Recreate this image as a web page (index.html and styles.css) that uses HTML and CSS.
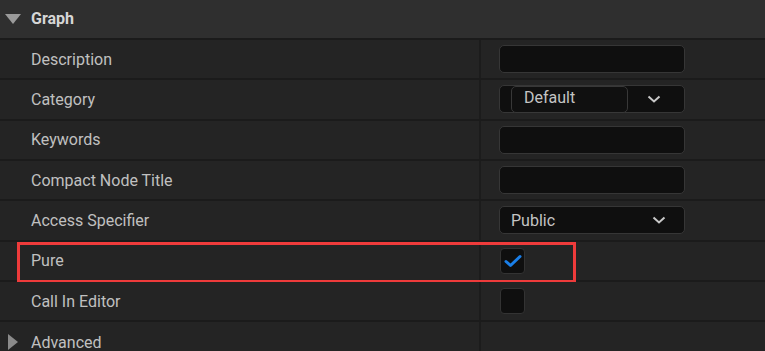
FILE: index.html
```html
<!DOCTYPE html>
<html>
<head>
<meta charset="utf-8">
<link rel="stylesheet" href="styles.css">
</head>
<body>
<div class="panel">
  <div class="header">
    <svg class="tri-down" width="16" height="10" viewBox="0 0 16 10"><polygon points="0,0 16,0 8,10" fill="#9a9a9a"/></svg>
    <span class="title">Graph</span>
  </div>
  <div class="row">
    <div class="name">Description</div>
    <div class="value"><div class="input"></div></div>
  </div>
  <div class="row">
    <div class="name">Category</div>
    <div class="value">
      <div class="input combo">
        <div class="inner">Default</div>
        <svg class="chev" width="14" height="8" viewBox="0 0 14 8"><polyline points="1.5,1.5 7,6.5 12.5,1.5" fill="none" stroke="#c8c8c8" stroke-width="2"/></svg>
      </div>
    </div>
  </div>
  <div class="row">
    <div class="name">Keywords</div>
    <div class="value"><div class="input"></div></div>
  </div>
  <div class="row">
    <div class="name">Compact Node Title</div>
    <div class="value"><div class="input"></div></div>
  </div>
  <div class="row">
    <div class="name">Access Specifier</div>
    <div class="value">
      <div class="input select">
        <span class="sel-text">Public</span>
        <svg class="chev" width="14" height="8" viewBox="0 0 14 8"><polyline points="1.5,1.5 7,6.5 12.5,1.5" fill="none" stroke="#c8c8c8" stroke-width="2"/></svg>
      </div>
    </div>
  </div>
  <div class="row">
    <div class="name">Pure</div>
    <div class="value">
      <div class="check">
        <svg width="18" height="14" viewBox="0 0 18 14"><polyline points="2,7.5 6.5,11.5 16,2.5" fill="none" stroke="#1a7fe8" stroke-width="3" stroke-linecap="round" stroke-linejoin="round"/></svg>
      </div>
    </div>
    <div class="highlight"></div>
  </div>
  <div class="row">
    <div class="name">Call In Editor</div>
    <div class="value"><div class="check"></div></div>
  </div>
  <div class="row adv">
    <div class="name adv-name">
      <svg class="tri-right" width="10" height="16" viewBox="0 0 10 16"><polygon points="0,0 10,8 0,16" fill="#8a8a8a"/></svg>
      <span>Advanced</span>
    </div>
    <div class="value"></div>
  </div>
</div>
</body>
</html>
```

FILE: styles.css
```css
html, body {
  margin: 0;
  padding: 0;
  background: #242424;
}
body {
  font-family: Roboto, "Noto Sans", sans-serif;
  width: 765px;
  height: 351px;
  overflow: hidden;
}
.panel {
  display: flex;
  flex-direction: column;
}
.header {
  height: 40px;
  background: #2f2f2f;
  border-bottom: 2px solid #1b1b1b;
  display: flex;
  align-items: center;
  box-sizing: border-box;
  flex-shrink: 0;
}
.tri-down {
  margin-left: 5px;
  margin-right: 10px;
  margin-top: -1px;
}
.title {
  font-weight: bold;
  font-size: 16px;
  color: #d6d6d6;
  margin-top: -2px;
}
.row {
  position: relative;
  display: grid;
  grid-template-columns: 481px 1fr;
  height: 40.33px;
  flex-shrink: 0;
  box-sizing: border-box;
  border-bottom: 2px solid #1b1b1b;
  background: #242424;
}
.name {
  display: flex;
  align-items: center;
  padding-left: 31px;
  font-size: 16px;
  color: #c0c0c0;
  border-right: 2px solid #1c1c1c;
}
.value {
  display: flex;
  align-items: center;
  padding-left: 18px;
}
.input {
  width: 186px;
  height: 28px;
  box-sizing: border-box;
  background: #0f0f0f;
  border: 1px solid #363636;
  border-radius: 5px;
}
.combo {
  display: flex;
  align-items: center;
  padding-left: 11px;
}
.inner {
  width: 117px;
  height: 27px;
  box-sizing: border-box;
  border: 1px solid #383838;
  border-radius: 5px;
  background: #101010;
  font-size: 16px;
  color: #c4c4c4;
  padding-left: 12px;
  line-height: 22px;
  margin-top: 1px;
}
.combo .chev {
  margin-left: 19px;
}
.select {
  display: flex;
  align-items: center;
  padding-left: 11px;
  font-size: 16px;
  color: #c4c4c4;
}
.sel-text {
  flex: 1;
}
.select .chev {
  margin-right: 18px;
}
.check {
  width: 25px;
  height: 26px;
  box-sizing: border-box;
  background: #0f0f0f;
  border: 1px solid #333333;
  border-radius: 4px;
  display: flex;
  align-items: center;
  justify-content: center;
  margin-left: 1px;
}
.highlight {
  position: absolute;
  left: 17px;
  top: 0;
  width: 559px;
  height: 41px;
  box-sizing: border-box;
  border: 3px solid #ee3b3b;
}
.adv {
  border-bottom: none;
}
.adv-name {
  padding-left: 8px;
}
.tri-right {
  margin-right: 13px;
}
```
